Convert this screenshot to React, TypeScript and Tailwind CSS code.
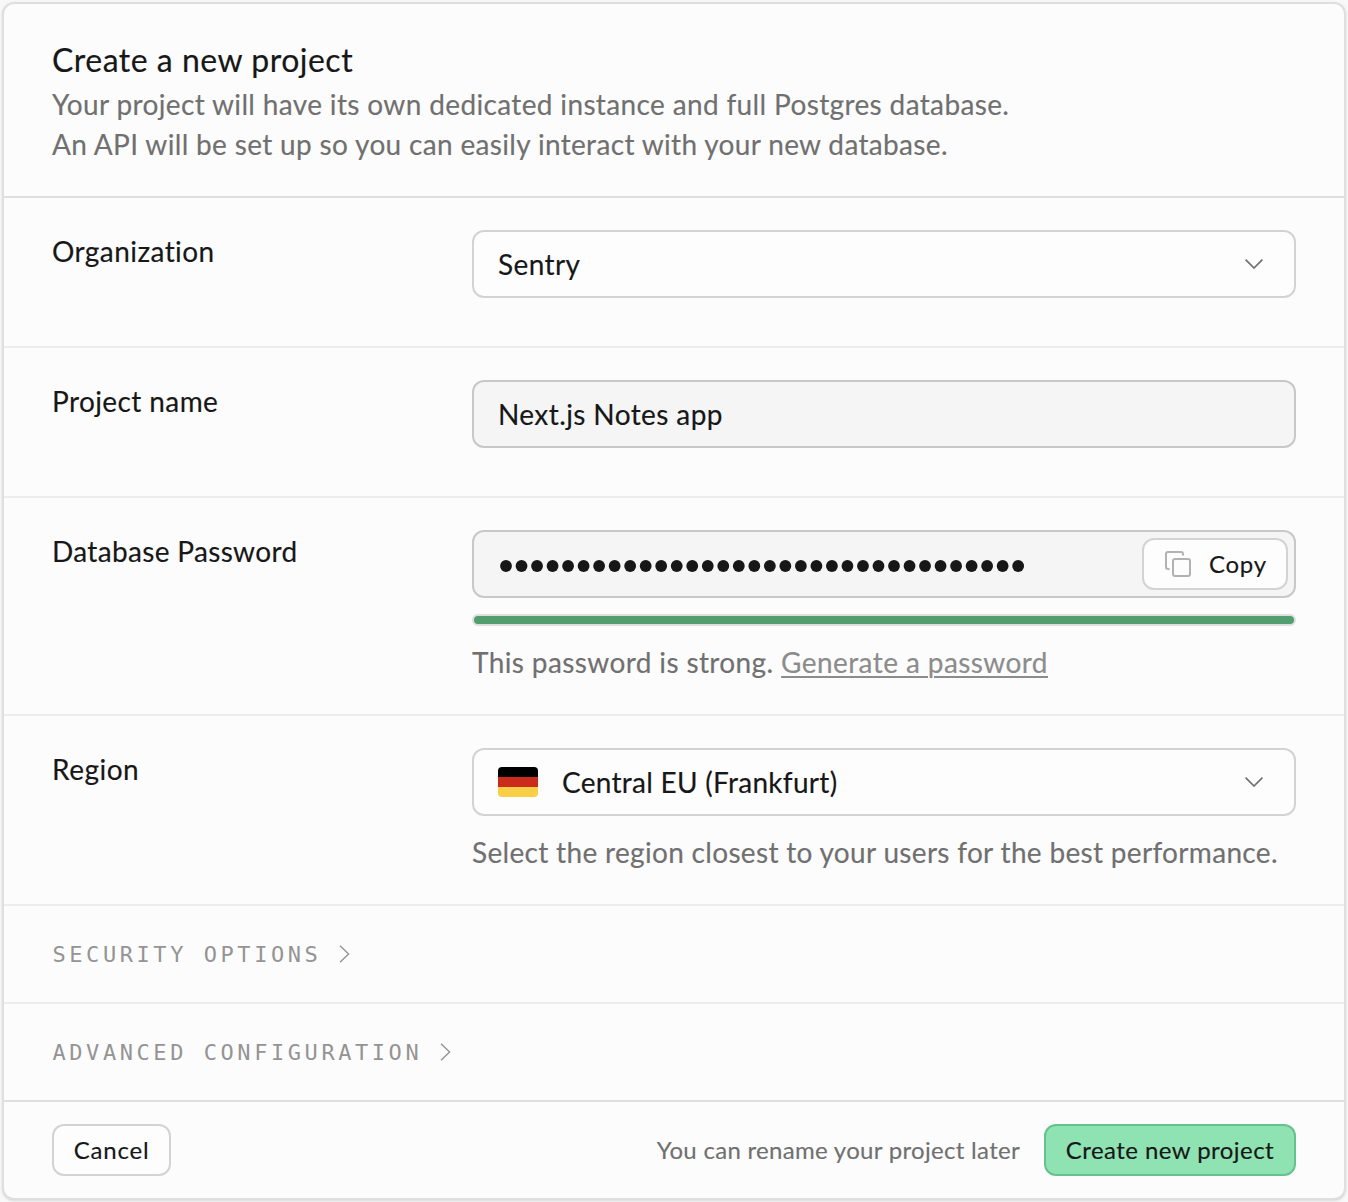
import type { ReactNode } from "react";

const PASSWORD_LENGTH = 34;

function ChevronDown() {
  return (
    <svg className="h-[10px] w-[18px] text-[#707070]" viewBox="0 0 18 10" fill="none" stroke="currentColor" strokeWidth="1.7">
      <path d="M0.6 0.7 L9 9 L17.4 0.7" />
    </svg>
  );
}

function ChevronRight() {
  return (
    <svg className="h-[18px] w-[11px]" viewBox="0 0 11 18" fill="none" stroke="currentColor" strokeWidth="1.4">
      <path d="M1 0.7 L9.6 9 L1 17.3" />
    </svg>
  );
}

function CopyIcon() {
  return (
    <svg className="h-[26px] w-[26px] text-[#b2b2b2]" viewBox="0 0 26 26" fill="none" stroke="currentColor" strokeWidth="2" strokeLinejoin="round">
      <rect x="8" y="8" width="17" height="17" rx="2" />
      <path d="M4.5 18H3a2 2 0 0 1-2-2V3a2 2 0 0 1 2-2h13a2 2 0 0 1 2 2v1.5" />
    </svg>
  );
}

function PasswordDots() {
  return (
    <svg className="mt-1 h-3 w-[526px]" viewBox="0 0 526 12" fill="#171717">
      {Array.from({ length: PASSWORD_LENGTH }, (_, i) => (
        <circle key={i} cx={6 + i * 15.52} cy={6} r={5.9} />
      ))}
    </svg>
  );
}

function FormRow({ label, labelClass, children, last }: { label: string; labelClass: string; children: ReactNode; last?: boolean }) {
  return (
    <div className={`flex border-b-2 border-[#ededed] px-12 pt-8 ${last ? "pb-8" : ""}`}>
      <div className={`h-10 w-[420px] shrink-0 pt-px text-[28px] leading-10 text-[#171717] ${labelClass}`}>{label}</div>
      <div className="min-w-0 flex-1">{children}</div>
    </div>
  );
}

function Disclosure({ title, className }: { title: string; className: string }) {
  return (
    <button
      className={`flex h-[98px] w-full items-center gap-[18px] border-b-2 pr-12 pl-[48.5px] font-['DejaVu_Sans_Mono',monospace] text-[22px] tracking-[3.56px] text-[#949494] [-webkit-text-stroke:0px] ${className}`}
    >
      <span>{title}</span>
      <ChevronRight />
    </button>
  );
}

export default function App() {
  return (
    <div className="h-[1202px] w-full bg-[#f8f8f8] p-[2px] font-['Lato',sans-serif] [-webkit-text-stroke:0.15px]">
      <div className="flex h-[1198px] flex-col rounded-xl border-2 border-[#dfdfdf] bg-[#fcfcfc] shadow-sm">
        <header className="border-b-2 border-[#dfdfdf] px-12 py-8">
          <h1 className="text-[32px] leading-[48px] tracking-[0.5px] text-[#171717]">Create a new project</h1>
          <p className="text-[28px] leading-10 tracking-[0.355px] text-[#707070]">
            Your project will have its own dedicated instance and full Postgres database.
            <br />
            <span className="tracking-[0.335px]">An API will be set up so you can easily interact with your new database.</span>
          </p>
        </header>

        <FormRow label="Organization" labelClass="tracking-[0.43px]">
          <div className="mb-12 flex h-[68px] items-center justify-between rounded-xl border-2 border-[#d3d3d3] bg-[#fdfdfd] pl-6 pr-[31px] text-[28px] tracking-[0.4px] text-[#171717]">
            Sentry
            <ChevronDown />
          </div>
        </FormRow>

        <FormRow label="Project name" labelClass="tracking-[0.4px]">
          <div className="mb-12 flex h-[68px] items-center rounded-xl border-2 border-[#c8c8c8] bg-[#f5f5f5] px-6 text-[28px] tracking-[0.4px] text-[#171717]">
            Next.js Notes app
          </div>
        </FormRow>

        <FormRow label="Database Password" labelClass="tracking-[0.33px]" last>
          <div className="flex h-[68px] items-center justify-between rounded-xl border-2 border-[#c8c8c8] bg-[#f5f5f5] pl-[25.5px] pr-[6px]">
            <PasswordDots />
            <button className="flex h-[52px] w-[146px] items-center gap-[18px] rounded-xl border-2 border-[#d3d3d3] bg-[#fdfdfd] pl-[21px] text-[24px] tracking-[0.7px] text-[#171717]">
              <CopyIcon />
              Copy
            </button>
          </div>
          <div className="mt-4 h-3 rounded-full border-2 border-[#dfdfdf] bg-[#529e6f]" />
          <p className="mt-4 text-[28px] leading-10 tracking-[0.38px] whitespace-nowrap text-[#707070]">
            This password is strong.{" "}
            <a className="tracking-[0.41px] text-[#8c8c8c] underline decoration-2 underline-offset-[3px]">Generate a password</a>
          </p>
        </FormRow>

        <FormRow label="Region" labelClass="tracking-[0.5px]" last>
          <div className="flex h-[68px] items-center rounded-xl border-2 border-[#d3d3d3] bg-[#fdfdfd] pl-6 pr-[31px] text-[28px] tracking-[0.28px] text-[#171717]">
            <div className="mr-6 flex h-[30px] w-10 flex-col overflow-hidden rounded-[4px]">
              <span className="flex-1 bg-black" />
              <span className="flex-1 bg-[#cb2b1d]" />
              <span className="flex-1 bg-[#f8cf46]" />
            </div>
            <span className="flex-1">Central EU (Frankfurt)</span>
            <ChevronDown />
          </div>
          <p className="mt-4 text-[28px] leading-10 tracking-[0.32px] whitespace-nowrap text-[#707070]">
            Select the region closest to your users for the best performance.
          </p>
        </FormRow>

        <Disclosure title="SECURITY OPTIONS" className="border-[#ededed]" />
        <Disclosure title="ADVANCED CONFIGURATION" className="border-[#dfdfdf]" />

        <footer className="flex flex-1 items-center px-12">
          <button className="h-[52px] w-[119px] rounded-xl border-2 border-[#d3d3d3] bg-[#fdfdfd] text-[24px] tracking-[0.8px] text-[#171717]">
            Cancel
          </button>
          <span className="mr-6 ml-auto text-[24px] tracking-[0.3px] text-[#707070]">You can rename your project later</span>
          <button className="h-[52px] w-[252px] rounded-xl border-2 border-[#65c28b] bg-[#8fe2b2] text-[24px] tracking-[0.45px] text-[#171717]">
            Create new project
          </button>
        </footer>
      </div>
    </div>
  );
}
